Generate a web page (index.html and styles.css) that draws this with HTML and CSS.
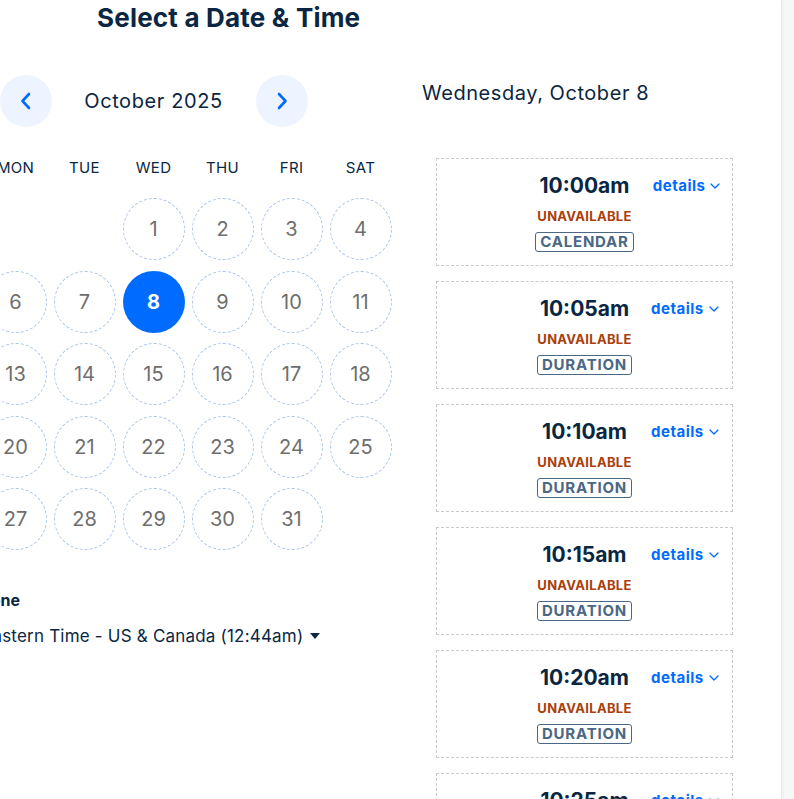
FILE: index.html
```html
<!DOCTYPE html>
<html lang="en">
<head>
<meta charset="utf-8">
<title>Select a Date &amp; Time</title>
<link rel="stylesheet" href="styles.css">
</head>
<body>
<div class="card">
  <section class="cal-col">
    <h1 class="title">Select a Date &amp; Time</h1>
    <div class="month-nav">
      <button class="nav-btn" aria-label="Previous month">
        <svg width="14" height="20" viewBox="0 0 14 20"><path d="M10 3 L3.5 10 L10 17" fill="none" stroke="#006bff" stroke-width="2.6" stroke-linecap="round" stroke-linejoin="round"/></svg>
      </button>
      <div class="month-label">October 2025</div>
      <button class="nav-btn" aria-label="Next month">
        <svg width="14" height="20" viewBox="0 0 14 20"><path d="M4 3 L10.5 10 L4 17" fill="none" stroke="#006bff" stroke-width="2.6" stroke-linecap="round" stroke-linejoin="round"/></svg>
      </button>
    </div>
    <div class="weekdays">
      <div>SUN</div><div>MON</div><div>TUE</div><div>WED</div><div>THU</div><div>FRI</div><div>SAT</div>
    </div>
    <div class="days">
      <div class="empty"></div><div class="empty"></div><div class="empty"></div>
      <div class="day">1</div><div class="day">2</div><div class="day">3</div><div class="day">4</div>
      <div class="day">5</div><div class="day">6</div><div class="day">7</div><div class="day selected">8</div><div class="day">9</div><div class="day">10</div><div class="day">11</div>
      <div class="day">12</div><div class="day">13</div><div class="day">14</div><div class="day">15</div><div class="day">16</div><div class="day">17</div><div class="day">18</div>
      <div class="day">19</div><div class="day">20</div><div class="day">21</div><div class="day">22</div><div class="day">23</div><div class="day">24</div><div class="day">25</div>
      <div class="day">26</div><div class="day">27</div><div class="day">28</div><div class="day">29</div><div class="day">30</div><div class="day">31</div>
    </div>
    <div class="tz">
      <div class="tz-label">Time zone</div>
      <div class="tz-value">
        <svg class="globe" width="18" height="18" viewBox="0 0 16 16"><circle cx="8" cy="8" r="6.5" fill="none" stroke="#0a2642" stroke-width="1.3"/><ellipse cx="8" cy="8" rx="2.8" ry="6.5" fill="none" stroke="#0a2642" stroke-width="1.2"/><path d="M1.5 8 H14.5" stroke="#0a2642" stroke-width="1.2"/></svg>
        <span class="tz-text">Eastern Time - US &amp; Canada (12:44am)</span>
        <svg class="caret" width="10" height="6" viewBox="0 0 10 6"><path d="M0 0 H10 L5 6 Z" fill="#0a2642"/></svg>
      </div>
    </div>
  </section>
  <section class="slots-col">
    <h2 class="day-title">Wednesday, October 8</h2>
    <div class="slot-list">
      <div class="slot">
        <div class="slot-main">
          <div class="time">10:00am</div>
          <div class="status">UNAVAILABLE</div>
          <div class="badge">CALENDAR</div>
        </div>
        <div class="details">details <svg width="10" height="6" viewBox="0 0 10 6"><path d="M1 1 L5 5 L9 1" fill="none" stroke="#006bff" stroke-width="1.3" stroke-linecap="round" stroke-linejoin="round"/></svg></div>
      </div>
      <div class="slot">
        <div class="slot-main">
          <div class="time">10:05am</div>
          <div class="status">UNAVAILABLE</div>
          <div class="badge">DURATION</div>
        </div>
        <div class="details">details <svg width="10" height="6" viewBox="0 0 10 6"><path d="M1 1 L5 5 L9 1" fill="none" stroke="#006bff" stroke-width="1.3" stroke-linecap="round" stroke-linejoin="round"/></svg></div>
      </div>
      <div class="slot">
        <div class="slot-main">
          <div class="time">10:10am</div>
          <div class="status">UNAVAILABLE</div>
          <div class="badge">DURATION</div>
        </div>
        <div class="details">details <svg width="10" height="6" viewBox="0 0 10 6"><path d="M1 1 L5 5 L9 1" fill="none" stroke="#006bff" stroke-width="1.3" stroke-linecap="round" stroke-linejoin="round"/></svg></div>
      </div>
      <div class="slot">
        <div class="slot-main">
          <div class="time">10:15am</div>
          <div class="status">UNAVAILABLE</div>
          <div class="badge">DURATION</div>
        </div>
        <div class="details">details <svg width="10" height="6" viewBox="0 0 10 6"><path d="M1 1 L5 5 L9 1" fill="none" stroke="#006bff" stroke-width="1.3" stroke-linecap="round" stroke-linejoin="round"/></svg></div>
      </div>
      <div class="slot">
        <div class="slot-main">
          <div class="time">10:20am</div>
          <div class="status">UNAVAILABLE</div>
          <div class="badge">DURATION</div>
        </div>
        <div class="details">details <svg width="10" height="6" viewBox="0 0 10 6"><path d="M1 1 L5 5 L9 1" fill="none" stroke="#006bff" stroke-width="1.3" stroke-linecap="round" stroke-linejoin="round"/></svg></div>
      </div>
      <div class="slot">
        <div class="slot-main">
          <div class="time">10:25am</div>
          <div class="status">UNAVAILABLE</div>
          <div class="badge">DURATION</div>
        </div>
        <div class="details">details <svg width="10" height="6" viewBox="0 0 10 6"><path d="M1 1 L5 5 L9 1" fill="none" stroke="#006bff" stroke-width="1.3" stroke-linecap="round" stroke-linejoin="round"/></svg></div>
      </div>
    </div>
  </section>
</div>
</body>
</html>
```

FILE: styles.css
```css
html, body {
  margin: 0;
  padding: 0;
  height: 100%;
  overflow: hidden;
}
body {
  background: #f7f7f8;
  font-family: Inter, "Noto Sans", "Liberation Sans", sans-serif;
  color: #0a2642;
}
.card {
  width: 781px;
  height: 100%;
  background: #ffffff;
  box-shadow: 1px 0 3px rgba(0, 0, 0, 0.08);
  display: flex;
  align-items: flex-start;
}
.cal-col {
  margin-left: -88px;
  width: 483px;
  flex: none;
}
.title {
  margin: 3px 0 0 185px;
  font-size: 26px;
  line-height: 30px;
  font-weight: 700;
  letter-spacing: 0.2px;
  color: #0a2642;
}
.month-nav {
  margin-top: 42px;
  display: flex;
  align-items: center;
  justify-content: center;
  gap: 32px;
}
.nav-btn {
  width: 52px;
  height: 52px;
  border-radius: 50%;
  border: none;
  background: #eef4ff;
  display: flex;
  align-items: center;
  justify-content: center;
  padding: 0;
}
.month-label {
  font-size: 20px;
  line-height: 24px;
  letter-spacing: 0.6px;
  color: #0a2642;
  width: 140px;
  text-align: center;
}
.weekdays {
  margin-top: 31px;
  display: grid;
  grid-template-columns: repeat(7, 69px);
  font-size: 15px;
  line-height: 20px;
  letter-spacing: 0.3px;
  color: #0a2642;
  text-align: center;
}
.days {
  margin-top: 20px;
  display: grid;
  grid-template-columns: repeat(7, 69px);
  grid-auto-rows: 62px;
  row-gap: 10.5px;
  justify-items: center;
}
.day {
  width: 60px;
  height: 60px;
  border-radius: 50%;
  border: 1px dashed #a8c3e8;
  display: flex;
  align-items: center;
  justify-content: center;
  font-size: 20px;
  color: #6e6e6e;
}
.day.selected {
  background: #006bff;
  border-color: #006bff;
  color: #ffffff;
  font-weight: 700;
}
.tz {
  margin: 40px 0 0 27px;
}
.tz-label {
  font-size: 16px;
  line-height: 20px;
  font-weight: 700;
  color: #0a2642;
}
.tz-value {
  margin-top: 16px;
  padding-left: 17px;
  display: flex;
  align-items: center;
  font-size: 17px;
  line-height: 20px;
  letter-spacing: 0.2px;
  color: #0a2642;
}
.globe {
  margin-right: 8px;
}
.caret {
  margin-left: 7px;
}
.slots-col {
  margin-left: 27px;
  flex: none;
}
.day-title {
  margin: 80px 0 0 0;
  font-size: 20px;
  line-height: 26px;
  font-weight: 400;
  letter-spacing: 0.55px;
  color: #0a2642;
}
.slot-list {
  margin: 52px 0 0 14px;
  width: 297px;
  display: flex;
  flex-direction: column;
  gap: 15px;
}
.slot {
  height: 106px;
  border: 1px dashed #c9c9c9;
  display: grid;
  grid-template-columns: 1fr auto 1fr;
  align-items: start;
}
.slot-main {
  grid-column: 2;
  display: flex;
  flex-direction: column;
  align-items: center;
  padding-top: 14px;
}
.time {
  font-size: 21px;
  line-height: 26px;
  font-weight: 700;
  color: #0a2642;
}
.status {
  margin-top: 9px;
  font-size: 13px;
  line-height: 16px;
  font-weight: 700;
  color: #a9400d;
  letter-spacing: 0.3px;
}
.badge {
  margin-top: 8px;
  border: 1px solid #4a6785;
  border-radius: 3px;
  padding: 0 4px;
  font-size: 15px;
  line-height: 18px;
  font-weight: 700;
  color: #4a6785;
  letter-spacing: 0.8px;
}
.details {
  grid-column: 3;
  padding: 18px 0 0 19px;
  display: flex;
  align-items: center;
  gap: 5px;
  font-size: 15px;
  line-height: 18px;
  font-weight: 700;
  letter-spacing: 0.5px;
  color: #006bff;
}
```
